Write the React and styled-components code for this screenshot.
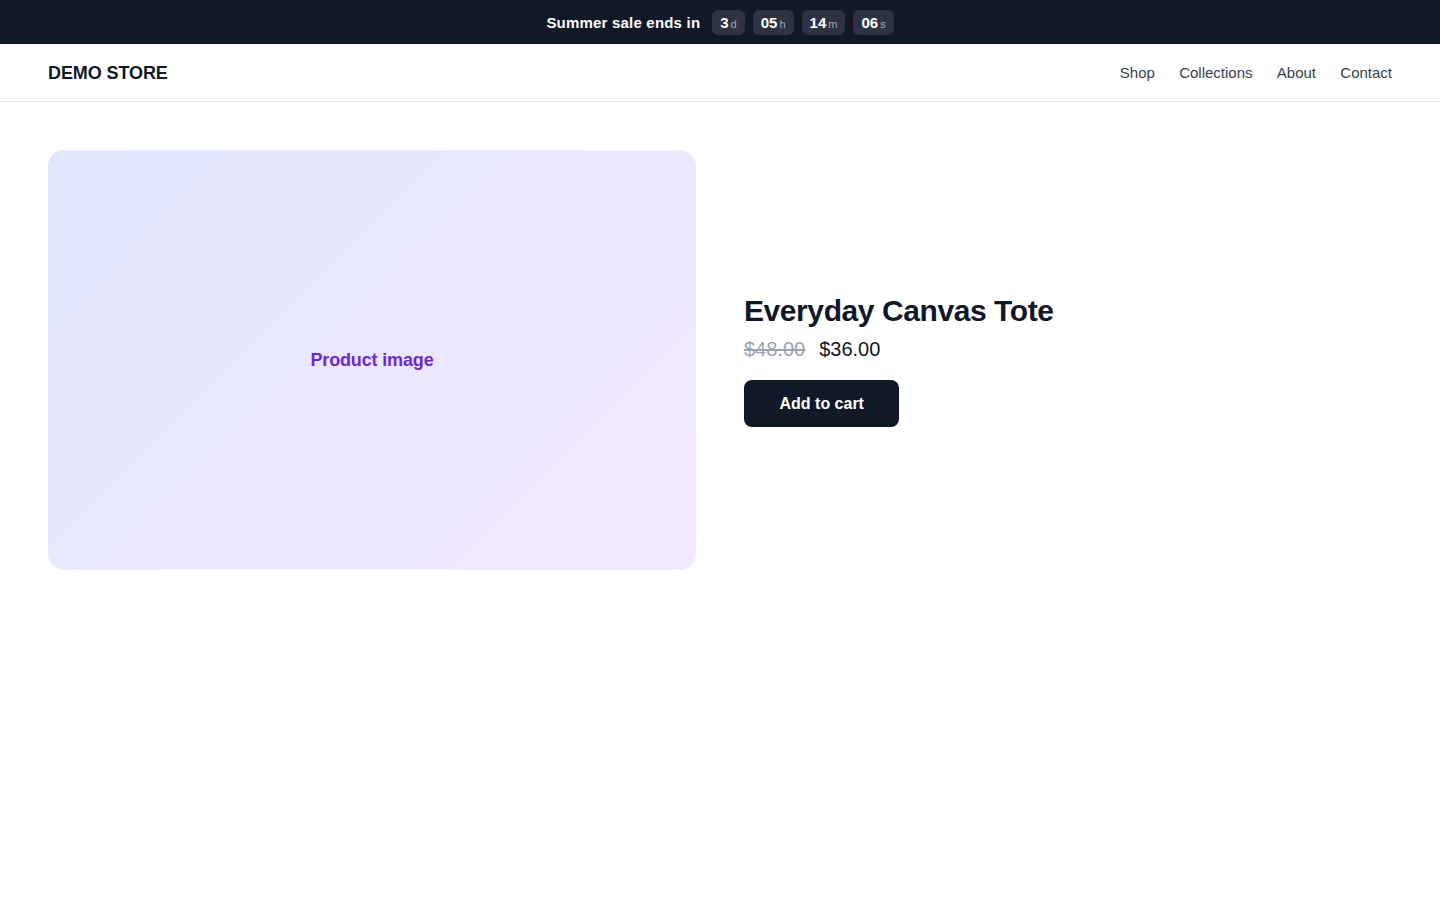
import React from "react";
import styled, { createGlobalStyle } from "styled-components";

const GlobalStyle = createGlobalStyle`
  html, body {
    margin: 0;
    padding: 0;
    background: #ffffff;
    font-family: "Liberation Sans", Arial, sans-serif;
    color: #111827;
  }
  * { box-sizing: border-box; }
`;

const countdown = [
  { value: "3", unit: "d" },
  { value: "05", unit: "h" },
  { value: "14", unit: "m" },
  { value: "06", unit: "s" }
];

const links = ["Shop", "Collections", "About", "Contact"];

const App = () => {
  return (
    <Page>
      <GlobalStyle />
      <Banner>
        <BannerText>Summer sale ends in</BannerText>
        <Timer>
          {countdown.map(item => (
            <Chip key={item.unit}>
              <ChipValue>{item.value}</ChipValue>
              <ChipUnit>{item.unit}</ChipUnit>
            </Chip>
          ))}
        </Timer>
      </Banner>
      <Header>
        <Logo>DEMO STORE</Logo>
        <Nav>
          {links.map(link => (
            <NavLink key={link} href="#">
              {link}
            </NavLink>
          ))}
        </Nav>
      </Header>
      <Main>
        <ImageCard>
          <ImageLabel>Product image</ImageLabel>
        </ImageCard>
        <Details>
          <Title>Everyday Canvas Tote</Title>
          <Prices>
            <OldPrice>$48.00</OldPrice>
            <Price>$36.00</Price>
          </Prices>
          <CartButton type="button">Add to cart</CartButton>
        </Details>
      </Main>
    </Page>
  );
};

export default App;

const Page = styled.div`
  min-height: 100vh;
  background: #ffffff;
`;
const Banner = styled.div`
  height: 44px;
  background: #111827;
  display: flex;
  align-items: center;
  justify-content: center;
  gap: 12px;
  color: #ffffff;
`;
const BannerText = styled.span`
  font-size: 15px;
  font-weight: 700;
  letter-spacing: 0.2px;
`;
const Timer = styled.div`
  display: flex;
  gap: 8px;
`;
const Chip = styled.span`
  display: inline-flex;
  align-items: baseline;
  gap: 2px;
  height: 25px;
  line-height: 25px;
  padding: 0 8px;
  border-radius: 6px;
  background: #2d3342;
`;
const ChipValue = styled.span`
  font-size: 15px;
  font-weight: 700;
  color: #ffffff;
`;
const ChipUnit = styled.span`
  font-size: 11px;
  color: #a3a9b5;
`;
const Header = styled.header`
  height: 58px;
  padding: 0 48px;
  display: flex;
  align-items: center;
  justify-content: space-between;
  border-bottom: 1px solid #e5e7eb;
`;
const Logo = styled.div`
  padding-top: 2px;
  font-size: 18px;
  font-weight: 700;
  letter-spacing: -0.1px;
  color: #111827;
`;
const Nav = styled.nav`
  display: flex;
  gap: 24.3px;
`;
const NavLink = styled.a`
  font-size: 15px;
  color: #374151;
  text-decoration: none;
`;
const Main = styled.main`
  padding: 48px;
  display: grid;
  grid-template-columns: 1fr 1fr;
  gap: 48px;
  align-items: center;
`;
const ImageCard = styled.div`
  height: 420px;
  border-radius: 16px;
  background: linear-gradient(135deg, #e0e7ff 0%, #f3e8ff 100%);
  display: flex;
  align-items: center;
  justify-content: center;
`;
const ImageLabel = styled.span`
  font-size: 18px;
  font-weight: 700;
  letter-spacing: -0.15px;
  color: #6d28d9;
`;
const Details = styled.div`
  display: flex;
  flex-direction: column;
  align-items: flex-start;
`;
const Title = styled.h1`
  margin: 0 0 6px;
  font-size: 30px;
  line-height: 36px;
  font-weight: 700;
  letter-spacing: -0.42px;
  color: #111827;
`;
const Prices = styled.div`
  display: flex;
  align-items: baseline;
  gap: 14px;
  font-size: 20px;
  line-height: 28px;
`;
const OldPrice = styled.span`
  color: #9ca3af;
  text-decoration: line-through;
`;
const Price = styled.span`
  color: #111827;
`;
const CartButton = styled.button`
  margin-top: 17px;
  height: 47px;
  padding: 0 35.5px;
  border: none;
  border-radius: 8px;
  background: #111827;
  color: #ffffff;
  font-family: inherit;
  font-size: 16px;
  font-weight: 700;
  cursor: pointer;
`;
